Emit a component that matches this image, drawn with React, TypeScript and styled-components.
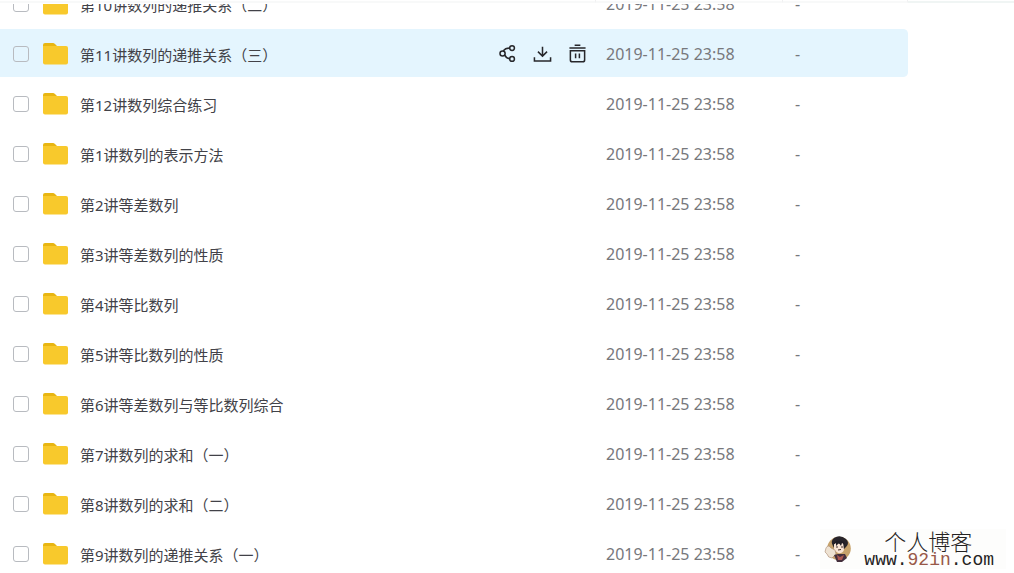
import React from "react";
import styled, { createGlobalStyle } from "styled-components";

const GlobalStyle = createGlobalStyle`
  * { box-sizing: border-box; }
  body {
    margin: 0;
    background: #fff;
    color: #424248;
    font-family: "Noto Sans", "Noto Sans CJK SC", sans-serif;
    font-size: 15px;
  }
`;

const Page = styled.main`
  position: relative;
  height: 100vh;
  overflow: hidden;
`;

const HeaderEdge = styled.div`
  display: flex;
  height: 3px;
`;

const EdgeCell = styled.div<{ $width?: number }>`
  flex: ${(p) => (p.$width ? `0 0 ${p.$width}px` : "1")};
  border-right: 1px solid #f0f0f1;
  border-bottom: 2px solid #f8f9f9;
`;

const EdgeAside = styled.div`
  flex: 0 0 106px;
  border-bottom: 2px solid #f0f5f4;
`;

const Files = styled.table`
  width: calc(100% - 106px);
  table-layout: fixed;
  border-collapse: separate;
  border-spacing: 0;
`;

const Column = styled.col<{ $width?: number }>`
  width: ${(p) => (p.$width ? `${p.$width}px` : "auto")};
`;

const FileRow = styled.tr<{ $active: boolean }>`
  td {
    background-color: ${(p) => (p.$active ? "#e4f5fe" : "transparent")};
  }
`;

const Cell = styled.td`
  padding: 0;
  border: solid transparent;
  border-width: 1px 0;
  background-clip: padding-box;
  color: #77787c;
  font-size: 16px;
  &:last-child {
    border-radius: 0 5px 5px 0;
  }
`;

const CellBody = styled.div<{ $cut: boolean; $left: number }>`
  display: flex;
  align-items: flex-end;
  height: ${(p) => (p.$cut ? 23 : 48)}px;
  overflow: hidden;
  padding-left: ${(p) => p.$left}px;
`;

const Line = styled.div`
  display: flex;
  flex: 1;
  align-items: center;
  height: 48px;
  padding-top: 2px;
  white-space: nowrap;
`;

const Check = styled.input`
  appearance: none;
  flex: none;
  width: 16px;
  height: 16px;
  margin: 0 14px 0 0;
  border: 1px solid #b8bbc0;
  border-radius: 3px;
  background: #fff;
  &:checked { background: #06a7ff; }
`;

const ActiveCheck = styled(Check)`
  background: transparent;
`;

const FolderArt = styled.svg`
  flex: none;
  width: 25px;
  height: 22px;
  margin: 0 12px 1px 0;
`;

const Name = styled.label`
  flex: 1;
  color: #424248;
  font-size: 15px;
`;

const Actions = styled.div`
  display: flex;
  align-items: center;
  gap: 15px;
  padding: 0 9px 1px 0;
`;

const Action = styled.button`
  display: flex;
  align-items: center;
  justify-content: center;
  width: 20px;
  height: 20px;
  padding: 0;
  border: 0;
  background: none;
  color: #27272b;
  svg {
    width: 19px;
    height: 19px;
    fill: none;
    stroke: currentColor;
    stroke-width: 1.6;
  }
`;

const Watermark = styled.aside`
  position: absolute;
  right: 8px;
  bottom: 4px;
  display: flex;
  align-items: center;
  gap: 12px;
  padding: 0 12px 0 4px;
  background: #fdfdfc;
`;

const Portrait = styled.svg`
  width: 28px;
  height: 28px;
`;

const Brand = styled.div`
  display: flex;
  flex-direction: column;
  color: #252323;
`;

const BrandName = styled.span`
  padding-left: 20px;
  font-family: "Noto Sans CJK SC", sans-serif;
  font-size: 22px;
  font-weight: 300;
  line-height: 22px;
`;

const Site = styled.span`
  font-family: "Liberation Mono", monospace;
  font-size: 18px;
  line-height: 18px;
  em {
    color: #985848;
    font-style: normal;
  }
`;

const Folder = () => (
  <FolderArt viewBox="0 0 25 22" aria-hidden="true">
    <path d="M0 8V2Q0 0 2 0H10Q11 0 12 1L14 3V8Z" fill="#e8b612" />
    <path d="M0 3H23Q25 3 25 5V19.500Q25 21.500 23 21.500H2Q0 21.500 0 19.500Z" fill="#f8c92c" />
  </FolderArt>
);

const ShareIcon = () => (
  <svg viewBox="0 0 20 20">
    <circle cx="4.800" cy="10" r="2.700" />
    <circle cx="14.800" cy="4.300" r="2.500" />
    <circle cx="14.800" cy="15.700" r="2.500" />
    <path d="M5.500 7.300Q7.500 4.300 12.300 4.200M7.200 11.500Q8.500 15 12.300 15.500" />
  </svg>
);

const DownloadIcon = () => (
  <svg viewBox="0 0 20 20">
    <path d="M10 3V12.500M5.200 8L10 12.800L14.800 8M1.500 14V18H18.500V14" />
  </svg>
);

const TrashIcon = () => (
  <svg viewBox="0 0 20 20">
    <path d="M7 1.200H13M1.500 4.200H18.500M2.500 7.200H17.500V16.800Q17.500 18.800 15.500 18.800H4.500Q2.500 18.800 2.500 16.800ZM8 10V15M12 10V15" />
  </svg>
);

const Avatar = () => (
  <Portrait viewBox="0 0 28 28" aria-hidden="true">
    <circle cx="15" cy="13.500" r="11.800" fill="#c7a26b" />
    <path d="M9 11Q6 6 10 3Q16-1 22 4Q26 8 22 12L20 14L10 13Z" fill="#28242a" />
    <path d="M10 9L13 7L15 9L19 7L20 15Q18 19 14 18L10 15Z" fill="#fae5d5" />
    <path d="M9 10Q11 5 15 6Q20 5 21 10L18 8L17 11L15 8L12 11L12 8Z" fill="#211e25" />
    <path d="M2 13Q4 9 7 13L11 15L12 19L8 23Q4 23 3 19L1 17Z" fill="#eee2d2" stroke="#a98970" strokeWidth=".6" />
    <path d="M10 20L14 19L21 19L23 23L18 27H13Z" fill="#45303d" />
    <path d="M13 20L16 22L20 20L18 25H14Z" fill="#ae5852" />
    <path d="M12 12H14M17 12H19M14 15L17 14.500" fill="none" stroke="#44302c" />
  </Portrait>
);

const names = [
  "第10讲数列的递推关系（二）",
  "第11讲数列的递推关系（三）",
  "第12讲数列综合练习",
  "第1讲数列的表示方法",
  "第2讲等差数列",
  "第3讲等差数列的性质",
  "第4讲等比数列",
  "第5讲等比数列的性质",
  "第6讲等差数列与等比数列综合",
  "第7讲数列的求和（一）",
  "第8讲数列的求和（二）",
  "第9讲数列的递推关系（一）",
];

export default function App() {
  return (
    <Page>
      <GlobalStyle />
      <HeaderEdge>
        <EdgeCell />
        <EdgeCell $width={187} />
        <EdgeCell $width={125} />
        <EdgeAside />
      </HeaderEdge>
      <Files>
        <colgroup>
          <Column />
          <Column $width={187} />
          <Column $width={125} />
        </colgroup>
        <tbody>
          {names.map((name, i) => {
            const active = i === 1;
            const cut = i === 0;
            const Box = active ? ActiveCheck : Check;
            return (
              <FileRow key={name} $active={active}>
                <Cell>
                  <CellBody $cut={cut} $left={13}>
                    <Line>
                      <Box type="checkbox" id={`file-${i}`} />
                      <Folder />
                      <Name htmlFor={`file-${i}`}>{name}</Name>
                      {active && (
                        <Actions>
                          <Action type="button" aria-label="分享"><ShareIcon /></Action>
                          <Action type="button" aria-label="下载"><DownloadIcon /></Action>
                          <Action type="button" aria-label="删除"><TrashIcon /></Action>
                        </Actions>
                      )}
                    </Line>
                  </CellBody>
                </Cell>
                <Cell>
                  <CellBody $cut={cut} $left={10}><Line>2019-11-25 23:58</Line></CellBody>
                </Cell>
                <Cell>
                  <CellBody $cut={cut} $left={12}><Line>-</Line></CellBody>
                </Cell>
              </FileRow>
            );
          })}
        </tbody>
      </Files>
      <Watermark>
        <Avatar />
        <Brand>
          <BrandName>个人博客</BrandName>
          <Site>www.<em>92in</em>.com</Site>
        </Brand>
      </Watermark>
    </Page>
  );
}
